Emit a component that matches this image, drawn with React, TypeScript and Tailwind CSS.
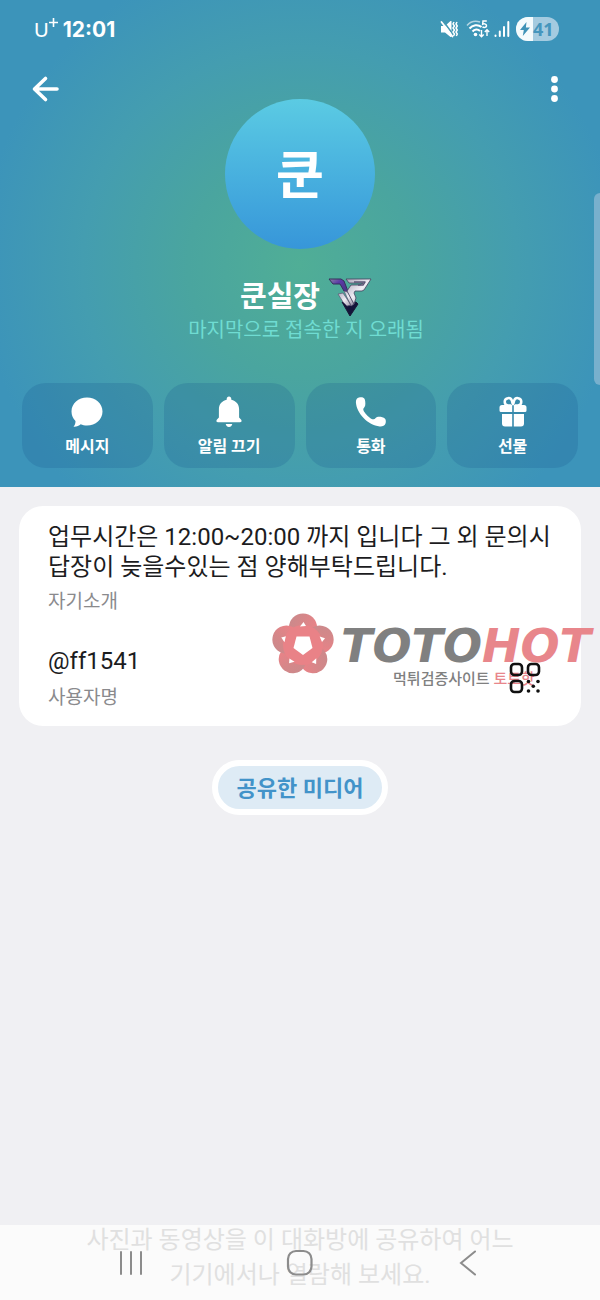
import type { ReactNode } from "react";

const PETALS = [0, 72, 144, 216, 288];

function MutedIcon() {
  return (
    <svg width="18" height="18" viewBox="0 0 18 18" fill="none" aria-hidden="true">
      <path d="M1 6h4l5.500-5h1v16h-1L5 12.500H1z" fill="#fff" />
      <path d="M3.500 1.500 13.500 15" stroke="#4599b3" strokeWidth="1.600" />
      <path d="M1.500 2 12.500 16.500" stroke="#fff" strokeWidth="1.800" strokeLinecap="round" />
      <path
        d="M14 2l-1 2 1.500 2-1.500 2 1.500 2-1.500 2 1.500 2-1 2M17 2l-1 2 1.300 2-1.300 2 1.300 2-1.300 2 1.300 2-1 2"
        stroke="#fff"
        strokeWidth="1.500"
      />
    </svg>
  );
}

function WifiIcon() {
  return (
    <svg width="24" height="20" viewBox="0 0 24 20" fill="none" aria-hidden="true">
      <path d="M1 6.500C4 3 9 1.500 14 3" stroke="#fff" strokeOpacity=".6" strokeWidth="1.500" />
      <path d="M3.500 9.500c3-3.600 8.500-4.500 12-1.500M6.500 12.500c2-2.400 5.300-2.600 7.500-.5" stroke="#fff" strokeWidth="2" />
      <circle cx="9.500" cy="15.500" r="1.800" fill="#fff" />
      <path d="M20.800 2h-3.800l-.3 3.200c1.800-.9 4 0 3.800 1.700-.2 1.600-2.600 2-4 .9" stroke="#fff" strokeWidth="1.500" />
      <path d="M15.500 11v6.500M13.300 15.500l2.200 2.200 2.200-2.200M21 17v-6M18.800 13l2.200-2.200 2.200 2.200" stroke="#fff" strokeWidth="1.400" />
    </svg>
  );
}

function SignalIcon() {
  return (
    <svg width="16" height="18" viewBox="0 0 16 18" stroke="#fff" strokeWidth="2" strokeLinecap="round" aria-hidden="true">
      <path d="M1.500 15.500v.5M5.800 11.500V16M10 7v9M14.300 2v14" />
    </svg>
  );
}

function StatusBar() {
  return (
    <div className="flex h-[26px] items-center justify-between pr-[41px] pl-[34px]">
      <div className="flex items-center gap-[5px]">
        <span className="flex items-start font-['Lato',sans-serif] text-xl leading-6 font-normal">
          U
          <svg width="9" height="12" viewBox="0 0 9 12" stroke="#fff" strokeWidth="1.600" aria-hidden="true">
            <path d="M4.500 1v9M0 5.500h9" />
          </svg>
        </span>
        <span className="pt-0.5 font-['Inter',sans-serif] text-[21px] leading-6 font-bold">12:01</span>
      </div>
      <div className="flex items-center">
        <MutedIcon />
        <span className="w-2" />
        <WifiIcon />
        <span className="w-1" />
        <SignalIcon />
        <span className="w-1.5" />
        <span className="flex h-6 w-[43px] items-center overflow-hidden rounded-full bg-[#a4cbe0]">
          <span className="flex h-6 w-[17px] items-center justify-center bg-[#f4fbfd]">
            <svg width="10" height="14" viewBox="0 0 10 14" fill="#3f93b8" aria-hidden="true">
              <path d="M6.500 0 0 8h3.800L2.800 14 10 5.600H5.900z" />
            </svg>
          </span>
          <span className="font-['Open_Sans',sans-serif] text-lg leading-6 font-bold text-[#4596bd]">41</span>
        </span>
      </div>
    </div>
  );
}

function Emblem() {
  return (
    <svg width="44" height="40" viewBox="0 0 44 40" strokeLinejoin="round" aria-hidden="true">
      <defs>
        <linearGradient id="steel" x1="0" y1="0" x2="1" y2="1">
          <stop offset="0" stopColor="#a9a3b8" />
          <stop offset=".5" stopColor="#efedf4" />
          <stop offset="1" stopColor="#8c869c" />
        </linearGradient>
        <linearGradient id="violet" x1="0" y1="0" x2="1" y2="1">
          <stop offset="0" stopColor="#8d86a4" />
          <stop offset=".35" stopColor="#5b3aa6" />
          <stop offset="1" stopColor="#44307c" />
        </linearGradient>
      </defs>
      <path d="m14 25 3 1h6l5-1 2 2-8 12z" fill="#14143a" stroke="#191836" />
      <path d="M1 2h12l3 2 5 13-5-3-4-7H5z" fill="url(#violet)" stroke="#35305a" />
      <path d="m10 17 5-1 8 12-4 1-4-4zM16 14l4 1 6 12-3 2z" fill="url(#steel)" stroke="#5b5672" strokeWidth=".7" />
      <path
        d="M18 2h25l-7 11-2 1h-7l-1 2 2 5-2 6-7-13 4-6h9l3-2H21z"
        fill="url(#steel)"
        stroke="#45405e"
        strokeWidth=".8"
      />
      <path d="M26 5h11l-2 3h-5" fill="none" stroke="#5a5474" strokeWidth="1.400" />
    </svg>
  );
}

function MessageIcon() {
  return (
    <svg width="32" height="32" viewBox="0 0 32 32" fill="#fff" aria-hidden="true">
      <path d="M16 1.500c8.600 0 15.500 6 15.500 14s-6.900 14-15.500 14c-2.300 0-4.500-.4-6.300-1.200C8 30 5.500 31 2.500 30.800c1.400-1.600 2-3.400 2-5.800C2 22.500.5 19.200.5 15.500c0-8 6.900-14 15.500-14z" />
    </svg>
  );
}

function BellIcon() {
  return (
    <svg width="32" height="32" viewBox="0 0 32 32" fill="#fff" aria-hidden="true">
      <path d="M16 .5c1.400 0 2.300 1 2.300 2.400v.8c4.700 1 7.800 4.600 7.800 9.500v8.300l2.100 2.300c.9 1.200.3 2.400-1.200 2.400H5c-1.500 0-2.100-1.200-1.200-2.400l2.100-2.300v-8.300c0-4.900 3.100-8.500 7.800-9.500v-.8C13.700 1.500 14.600.5 16 .5zM12.700 28h6.600c-.5 2-1.600 3-3.300 3s-2.800-1-3.300-3z" />
    </svg>
  );
}

function PhoneIcon() {
  return (
    <svg width="32" height="32" viewBox="0 0 32 32" fill="#fff" aria-hidden="true">
      <path d="M4 1.500c2-.6 4.300-.3 5.300.9 1 1.300 1.300 5 .9 7.200-.3 1.600-1.700 2.300-1.900 3.400-.3 1.600 2.300 5 4.400 6.900s4.500 3.600 6 3.400c1.400-.2 2-1.900 3.500-2.300 2.300-.6 6.200.2 7.600 1.400 1.300 1.200 1.300 3.600.6 5.400-.8 2-3 2.800-5.700 2.600C13 29.300 1.500 17.300.9 6.200.8 3.700 2 2 4 1.500z" />
    </svg>
  );
}

function GiftIcon() {
  return (
    <svg width="32" height="32" viewBox="0 0 32 32" aria-hidden="true">
      <path
        d="M14 9.500h-3a3.700 3.700 0 1 1 4-4.500L16 9l1-4A3.700 3.700 0 1 1 21 9.500h-3"
        fill="none"
        stroke="#fff"
        strokeWidth="2.500"
      />
      <path
        d="M5 9h10.200v7H4a1.500 1.500 0 0 1-1.500-1.500v-3A2.500 2.500 0 0 1 5 9zM16.800 9H27a2.500 2.500 0 0 1 2.500 2.500v3A1.500 1.500 0 0 1 28 16H16.800zM5 18h10.200v12.500H8a3 3 0 0 1-3-3zM16.800 18H27v9.500a3 3 0 0 1-3 3h-7.200z"
        fill="#fff"
      />
    </svg>
  );
}

function QrIcon() {
  return (
    <svg width="32" height="32" viewBox="0 0 32 32" fill="none" stroke="#111" strokeWidth="2.600" aria-hidden="true">
      <rect x="2" y="2" width="11" height="11" rx="3.500" />
      <rect x="19" y="2" width="11" height="11" rx="3.500" />
      <rect x="2" y="19" width="11" height="11" rx="3.500" />
      <g fill="#111" stroke="none">
        <circle cx="19.500" cy="19.500" r="1.800" />
        <circle cx="29" cy="19.500" r="1.800" />
        <circle cx="24.300" cy="24.300" r="1.800" />
        <circle cx="19.500" cy="29" r="1.800" />
        <circle cx="29" cy="29" r="1.800" />
      </g>
    </svg>
  );
}

function FlowerLogo() {
  return (
    <svg width="64" height="64" viewBox="-32 -32 64 64" aria-hidden="true">
      <defs>
        <linearGradient id="petal" x1="0" y1="0" x2="1" y2=".4">
          <stop offset="0" stopColor="#c98a8c" />
          <stop offset=".5" stopColor="#d58789" />
          <stop offset="1" stopColor="#e98287" />
        </linearGradient>
      </defs>
      {PETALS.map((angle) => (
        <circle key={angle} cy="-17.500" r="14" fill="url(#petal)" transform={`rotate(${angle})`} />
      ))}
      <circle r="20" fill="#e98287" />
      {PETALS.map((angle) => (
        <path key={angle} d="M-3-18.500 .5-23 3-19z" fill="#fff" transform={`rotate(${angle})`} />
      ))}
      <path d="M-6.500-8.500h13L9.500 3 0 10-9.500 3z" fill="#fff" />
    </svg>
  );
}

function Watermark() {
  return (
    <div className="pointer-events-none absolute top-[107px] right-[-10px] flex gap-1.5">
      <FlowerLogo />
      <div className="flex flex-col pt-3.5">
        <span className="font-['DejaVu_Sans',sans-serif] text-[46px] leading-[38px] font-bold whitespace-nowrap text-[#808080] italic">
          TOTO<span className="text-[#e8868b]">HOT</span>
        </span>
        <span className="pt-1 pl-[52px] text-[15px] leading-5 font-medium whitespace-nowrap text-[#808080]">
          먹튀검증사이트 <span className="text-[#e8868b]">토토핫</span>
        </span>
      </div>
    </div>
  );
}

function Action({ icon, label }: { icon: ReactNode; label: string }) {
  return (
    <button
      type="button"
      className="flex h-[85px] flex-col items-center rounded-3xl bg-[#14508c]/20 pt-[13px] text-base leading-6 font-bold"
    >
      {icon}
      <span className="pt-[7px]">{label}</span>
    </button>
  );
}

function ProfileHeader() {
  return (
    <header className="relative bg-[radial-gradient(circle_320px_at_50%_265px,#50ae96_0%,#4aa59f_35%,#449db0_68%,#3c94ba_100%)] pt-4 pb-[19px] text-white">
      <StatusBar />
      <div className="mt-8 flex items-start justify-between px-[30px]">
        <button type="button" aria-label="뒤로" className="flex size-[30px] items-center justify-center">
          <svg width="30" height="30" viewBox="0 0 30 30" fill="none" stroke="#fff" strokeWidth="3.600" strokeLinecap="round" strokeLinejoin="round" aria-hidden="true">
            <path d="M15.500 4.500 4.500 15l11 10.500M5 15h22" />
          </svg>
        </button>
        <div className="mt-[25px] flex size-[150px] items-center justify-center rounded-full bg-linear-to-b from-[#5bcbe3] to-[#3796d9] pt-1.5 text-[52px] leading-[60px] font-bold">
          쿤
        </div>
        <button type="button" aria-label="더보기" className="flex size-[30px] items-center justify-center">
          <svg width="30" height="30" viewBox="0 0 30 30" fill="#fff" aria-hidden="true">
            <circle cx="14.500" cy="5.500" r="3.400" />
            <circle cx="14.500" cy="15" r="3.400" />
            <circle cx="14.500" cy="24.500" r="3.400" />
          </svg>
        </button>
      </div>
      <div className="mt-7 pl-3">
        <div className="flex h-10 items-center justify-center gap-2">
          <h1 className="text-[29px] leading-9 font-bold">쿤실장</h1>
          <Emblem />
        </div>
        <p className="text-center text-xl leading-[26px] text-[#6fdcd2]">마지막으로 접속한 지 오래됨</p>
      </div>
      <div className="mt-10 grid grid-cols-4 gap-[11px] px-[22px]">
        <Action icon={<MessageIcon />} label="메시지" />
        <Action icon={<BellIcon />} label="알림 끄기" />
        <Action icon={<PhoneIcon />} label="통화" />
        <Action icon={<GiftIcon />} label="선물" />
      </div>
      <span className="absolute right-0 bottom-[102px] h-[192px] w-1.5 rounded-l-md bg-[#78b0cd]" />
    </header>
  );
}

export default function App() {
  return (
    <div className="flex min-h-screen flex-col overflow-x-hidden bg-[#f0f0f3] font-['Roboto','Noto_Sans_CJK_KR',sans-serif]">
      <ProfileHeader />
      <main className="flex flex-1 flex-col px-[19px] pt-[19px]">
        <section className="relative rounded-3xl bg-white px-[29px] py-4">
          <p className="text-2xl leading-[30px] break-keep text-[#1c1c1e]">
            업무시간은 12:00~20:00 까지 입니다 그 외 문의시 답장이 늦을수있는 점 양해부탁드립니다.
          </p>
          <p className="mt-2 text-[19px] leading-6 text-[#8a8a8d]">자기소개</p>
          <div className="mt-8 flex items-center justify-between pr-[11px]">
            <div>
              <p className="text-2xl leading-[30px] text-[#1c1c1e]">@ff1541</p>
              <p className="mt-2.5 text-[19px] leading-6 text-[#8a8a8d]">사용자명</p>
            </div>
            <button type="button" aria-label="QR 코드" className="relative z-10">
              <QrIcon />
            </button>
          </div>
          <Watermark />
        </section>
        <button
          type="button"
          className="mt-[34px] self-center rounded-full border-[6px] border-white bg-[#deebf5] px-[19px] pt-2 pb-1.5 text-[22px] leading-[29px] font-bold text-[#4293c9]"
        >
          공유한 미디어
        </button>
      </main>
      <footer className="relative flex h-[75px] items-end justify-center overflow-hidden bg-[#fbfbfb] pb-[7px]">
        <p className="w-[450px] text-center text-2xl leading-[35px] break-keep text-[#e0e0e0]">
          사진과 동영상을 이 대화방에 공유하여 어느 기기에서나 열람해 보세요.
        </p>
        <nav className="absolute inset-0 flex items-center justify-between px-[115px]">
          <button type="button" aria-label="최근 앱">
            <svg width="32" height="28" viewBox="0 0 32 28" stroke="#8c8c8c" strokeWidth="2" strokeLinecap="round" aria-hidden="true">
              <path d="M6 3v22M16 3v22M26 3v22" />
            </svg>
          </button>
          <button type="button" aria-label="홈">
            <svg width="28" height="28" viewBox="0 0 28 28" fill="none" stroke="#8c8c8c" strokeWidth="2.200" aria-hidden="true">
              <rect x="2" y="2" width="23.500" height="23.500" rx="8" />
            </svg>
          </button>
          <button type="button" aria-label="뒤로 가기">
            <svg width="32" height="28" viewBox="0 0 32 28" fill="none" stroke="#8c8c8c" strokeWidth="2" strokeLinecap="round" aria-hidden="true">
              <path d="M22 2.500 8 14l14 11.500" />
            </svg>
          </button>
        </nav>
      </footer>
    </div>
  );
}
